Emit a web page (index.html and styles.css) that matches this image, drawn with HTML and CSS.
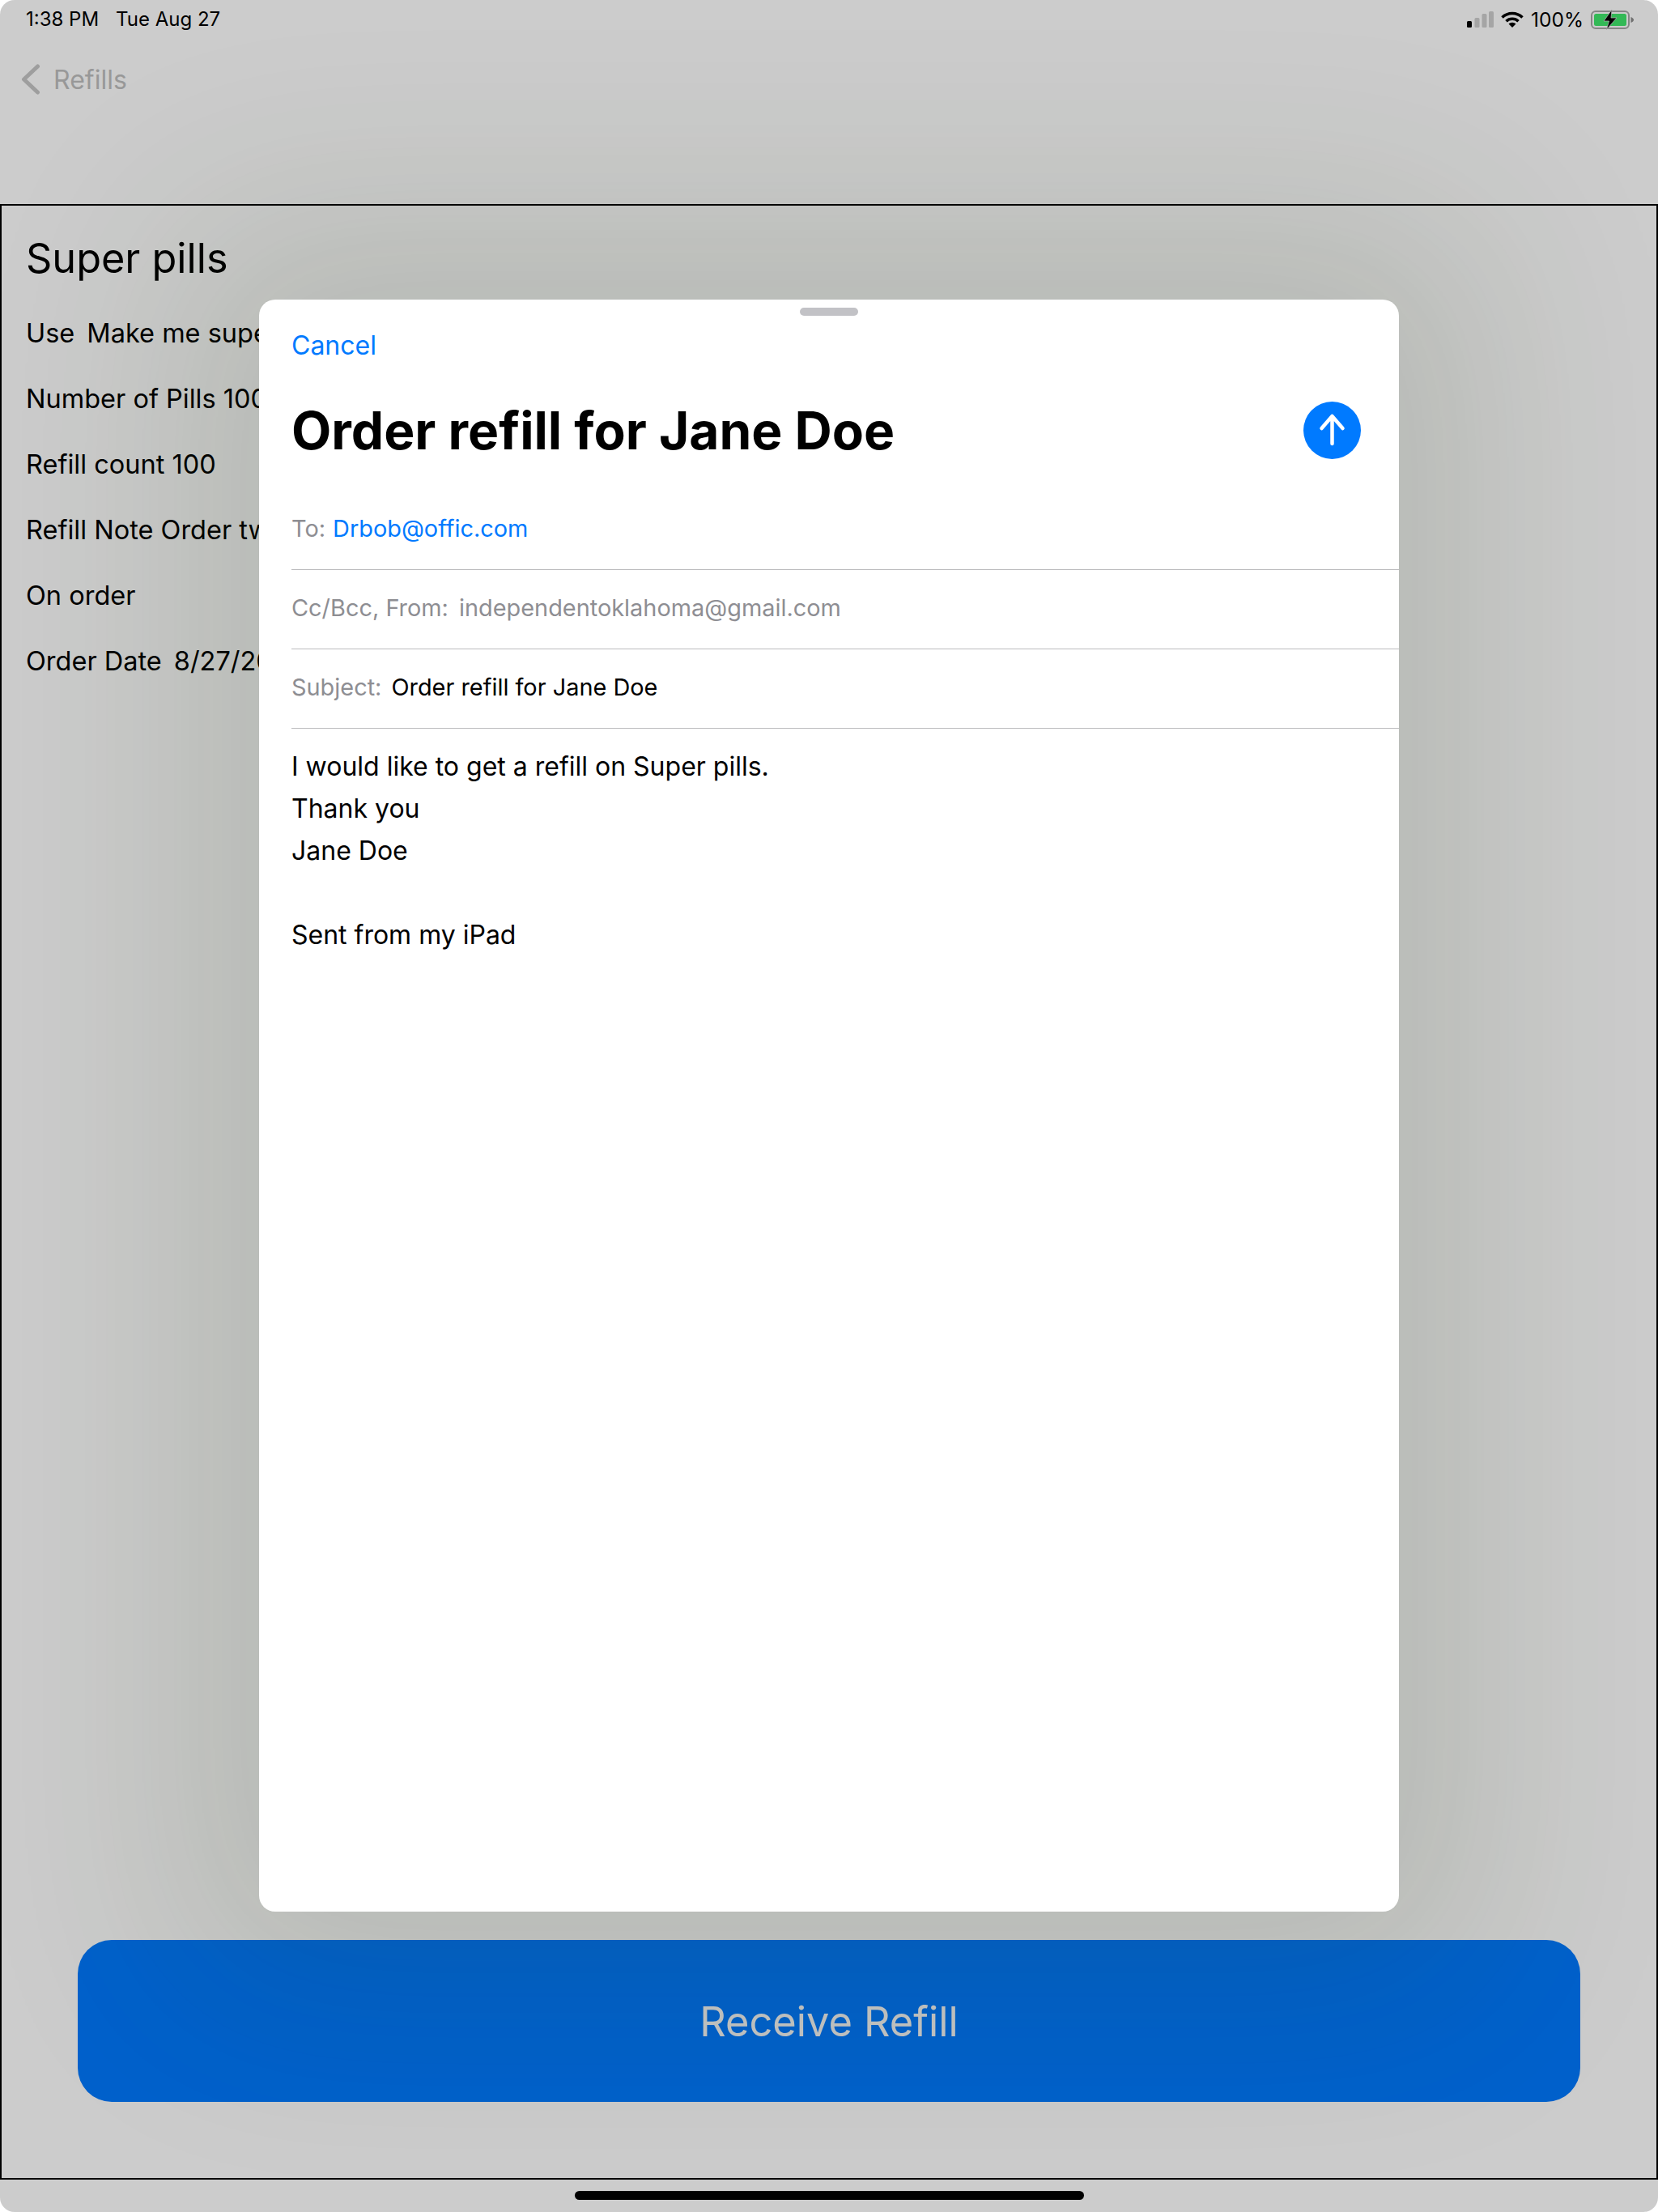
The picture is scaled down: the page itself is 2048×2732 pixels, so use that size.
FILE: index.html
```html
<!DOCTYPE html>
<html lang="en">
<head>
<meta charset="utf-8">
<title>Refills</title>
<link rel="stylesheet" href="styles.css">
</head>
<body>
<div class="screen">
  <div class="status">
    <div class="clock"><span>1:38 PM</span><span>Tue Aug 27</span></div>
    <div class="status-icons">
      <svg class="signal" width="33" height="20" viewBox="0 0 33 20"><rect x="0" y="12" width="6" height="8" rx="1.500" fill="#000"/><rect x="9.500" y="8" width="6" height="12" rx="1.500" fill="#cfcfcf"/><rect x="18.500" y="3" width="6" height="17" rx="1.500" fill="#cfcfcf"/><rect x="27" y="0" width="6" height="20" rx="1.500" fill="#cfcfcf"/></svg>
      <svg class="wifi" width="28" height="20" viewBox="0 0 28 20"><path d="M1.500 7.500 A18 18 0 0 1 26.500 7.500" fill="none" stroke="#000" stroke-width="3.600"/><path d="M6.500 12.200 A11 11 0 0 1 21.500 12.200" fill="none" stroke="#000" stroke-width="3.600"/><path d="M14 20 L9.500 15.500 A6.500 6.500 0 0 1 18.500 15.500 Z" fill="#000"/></svg>
      <span class="pct">100%</span>
      <svg class="battery" width="53" height="26" viewBox="0 0 53 26"><rect x="1" y="3" width="46" height="21" rx="5" fill="none" stroke="#a8a8a8" stroke-width="2"/><rect x="4" y="6" width="40" height="15" rx="2.500" fill="#40e86c"/><path d="M49.500 10 Q53 11.500 53 13.500 Q53 15.500 49.500 17 Z" fill="#8c8c8c"/><path d="M26 1 L16 15 H22.500 L19.500 25.500 L32 11 H25 Z" fill="#000" stroke="#d8d8d8" stroke-width="0.800"/></svg>
    </div>
  </div>
  <div class="nav">
    <svg class="chevron" width="26" height="40" viewBox="0 0 26 40"><path d="M22.500 5 L5.500 21 L22.500 37" fill="none" stroke="#c6c6c6" stroke-width="5" stroke-linecap="round" stroke-linejoin="round"/></svg>
    <span class="back">Refills</span>
  </div>
  <main class="frame">
    <h1 class="med-name">Super pills</h1>
    <p class="row">Use&thinsp; Make me super</p>
    <p class="row">Number of Pills 100</p>
    <p class="row">Refill count 100</p>
    <p class="row">Refill Note Order twice</p>
    <p class="row">On order</p>
    <p class="row">Order Date&thinsp; 8/27/2019</p>
    <button class="receive">Receive Refill</button>
  </main>
  <div class="home-area"></div>
</div>

<div class="dim">
  <section class="sheet">
    <div class="grabber"></div>
    <div class="cancel">Cancel</div>
    <div class="title-row">
      <h2 class="title">Order refill for Jane Doe</h2>
      <svg class="send" width="71" height="71" viewBox="0 0 71 71"><circle cx="35.500" cy="35.500" r="35.500" fill="#007aff"/><path d="M35.500 52 V19 M22.500 33 L35.500 18 L48.500 33" fill="none" stroke="#fff" stroke-width="4.500" stroke-linecap="round" stroke-linejoin="round"/></svg>
    </div>
    <div class="field"><span class="label">To:</span><span class="link">Drbob@offic.com</span></div>
    <div class="field"><span class="label">Cc/Bcc, From:</span><span class="label from">independentoklahoma@gmail.com</span></div>
    <div class="field"><span class="label">Subject:</span><span class="value">Order refill for Jane Doe</span></div>
    <div class="body-text">
      <p>I would like to get a refill on Super pills.</p>
      <p>Thank you</p>
      <p>Jane Doe</p>
      <p>&nbsp;</p>
      <p>Sent from my iPad</p>
    </div>
  </section>
</div>
<div class="home-bar"></div>
</body>
</html>
```
FILE: styles.css
```css
* { box-sizing: border-box; }
html, body { margin: 0; height: 100%; }
body {
  width: 2048px;
  height: 2732px;
  overflow: hidden;
  background: #fff;
  font-family: Inter, "Noto Sans", sans-serif;
  color: #000;
}
.screen {
  width: 2048px;
  height: 2732px;
  display: flex;
  flex-direction: column;
  background: #fff;
}
.status {
  height: 50px;
  padding: 8px 30px 0 32px;
  display: flex;
  justify-content: space-between;
  font-size: 24px;
  line-height: 32px;
}
.clock { display: flex; gap: 21px; }
.status-icons { display: flex; align-items: center; height: 32px; }
.signal { margin-right: 9px; }
.wifi { margin-right: 9px; }
.pct { margin-right: 9px; font-size: 24.500px; }
.nav {
  height: 202px;
  padding: 25px 0 0 24px;
  display: flex;
  align-items: flex-start;
  font-size: 32px;
  line-height: 48px;
}
.chevron { margin: 2px 16px 0 0; }
.back { color: #bfbfbf; }
.frame {
  flex: 1;
  border: 2px solid #000;
  padding: 34px 30px 94px 30px;
  display: flex;
  flex-direction: column;
}
.med-name {
  margin: 0 0 41px;
  font-size: 50.400px;
  line-height: 62px;
  font-weight: 400;
}
.row {
  margin: 0 0 40px;
  font-size: 32.500px;
  line-height: 41px;
}
.receive {
  margin: auto 64px 0;
  height: 200px;
  border: 0;
  border-radius: 42px;
  background: #007aff;
  color: #f8f8f8;
  font: 400 50.500px Inter, sans-serif;
}
.home-area { height: 40px; }
.dim {
  position: absolute;
  left: 0;
  top: 0;
  width: 2048px;
  height: 2732px;
  background: rgba(0, 0, 0, 0.2);
  border-radius: 18px;
  padding-top: 370px;
  display: flex;
  justify-content: center;
  align-items: flex-start;
}
.sheet {
  width: 1408px;
  height: 1991px;
  background: #fff;
  border-radius: 20px;
  padding-left: 40px;
  box-shadow: 0 0 320px 100px rgba(40, 58, 22, 0.13);
  display: flex;
  flex-direction: column;
}
.grabber {
  align-self: center;
  width: 72px;
  height: 10px;
  margin: 10px 0 16px -40px;
  border-radius: 5px;
  background: #c2c2c6;
}
.cancel {
  color: #007aff;
  font-size: 32px;
  line-height: 41px;
}
.title-row {
  margin-top: 46px;
  padding-right: 47px;
  display: flex;
  justify-content: space-between;
  align-items: center;
}
.title {
  margin: 0;
  font-size: 64px;
  line-height: 77px;
  font-weight: 700;
}
.field {
  height: 98px;
  padding-top: 26px;
  border-bottom: 1px solid #bcbcbe;
  display: flex;
  gap: 9px;
  font-size: 28.900px;
  line-height: 41px;
}
.title-row + .field { margin-top: 36px; }
.label { color: #8e8e93; }
.from { margin-left: 4px; }
.value { margin-left: 3px; }
.link { color: #007aff; }
.body-text {
  margin-top: 21px;
  font-size: 32px;
  line-height: 52px;
}
.body-text p { margin: 0; }
.home-bar {
  position: absolute;
  left: 710px;
  top: 2706px;
  width: 629px;
  height: 11px;
  border-radius: 6px;
  background: #000;
}
```
